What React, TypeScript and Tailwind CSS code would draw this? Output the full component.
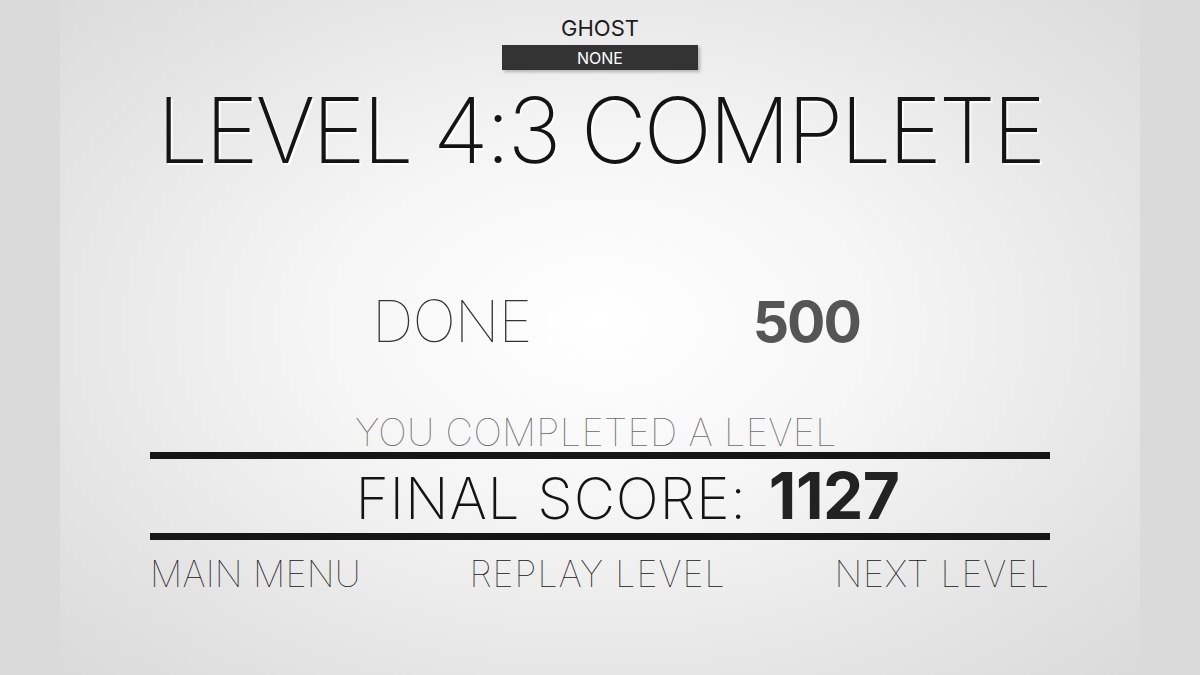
import React from 'react';

const thin = { fontFamily: 'Inter, "Liberation Sans", sans-serif' };

export default function App() {
    return (
        <div className="w-[1200px] h-[675px] overflow-hidden bg-[#dadada] flex justify-center antialiased" style={thin}>
            <div className="w-[1080px] h-full bg-[radial-gradient(ellipse_at_50%_48%,#ffffff_0%,#f6f6f6_35%,#e4e4e4_75%,#dadada_100%)] flex flex-col items-center">
                <div className="mt-[17px] text-[22px] leading-none text-[#1c1c1c]">GHOST</div>
                <div className="mt-[6px] w-[196px] h-[25px] bg-[#333333] shadow-[2px_2px_3px_rgba(0,0,0,0.25)] flex items-center justify-center text-white text-[16px] leading-none">
                    NONE
                </div>
                <h1 className="mt-[15px] text-[91px] leading-none font-extralight text-[#141414] tracking-[-3.2px] [text-shadow:2px_2px_1px_rgba(255,255,255,0.9)]">
                    LEVEL 4:3 COMPLETE
                </h1>

                <div className="mt-[116px] ml-[32px] w-[488px] flex justify-between items-baseline text-[58px] leading-none">
                    <span className="font-thin text-[#333333] tracking-[-1px]">DONE</span>
                    <span className="font-bold text-[#555555] text-[57px] tracking-[-2px]">500</span>
                </div>

                <div className="mt-[63px] -ml-[8px] text-[38px] leading-none font-thin text-[#6a6a6a] tracking-[0.3px]">YOU COMPLETED A LEVEL</div>
                <div className="mt-[1px] w-[900px] h-[7px] bg-[#151515]" />
                <div className="mt-[5px] ml-[55px] flex items-baseline leading-none text-[#141414]">
                    <span className="font-extralight text-[57px] tracking-[0.8px]">FINAL SCORE:</span>
                    <span className="ml-[22px] font-bold text-[64px] text-[#222222] tracking-[-0.5px]">1127</span>
                </div>
                <div className="mt-[5px] w-[900px] h-[7px] bg-[#151515]" />

                <div className="mt-[16px] w-[900px] flex justify-between text-[36px] leading-none font-thin text-[#141414]">
                    <span className="tracking-[0.2px]">MAIN MENU</span>
                    <span className="tracking-[1px]">REPLAY LEVEL</span>
                    <span className="tracking-[0.8px]">NEXT LEVEL</span>
                </div>
            </div>
        </div>
    );
}
